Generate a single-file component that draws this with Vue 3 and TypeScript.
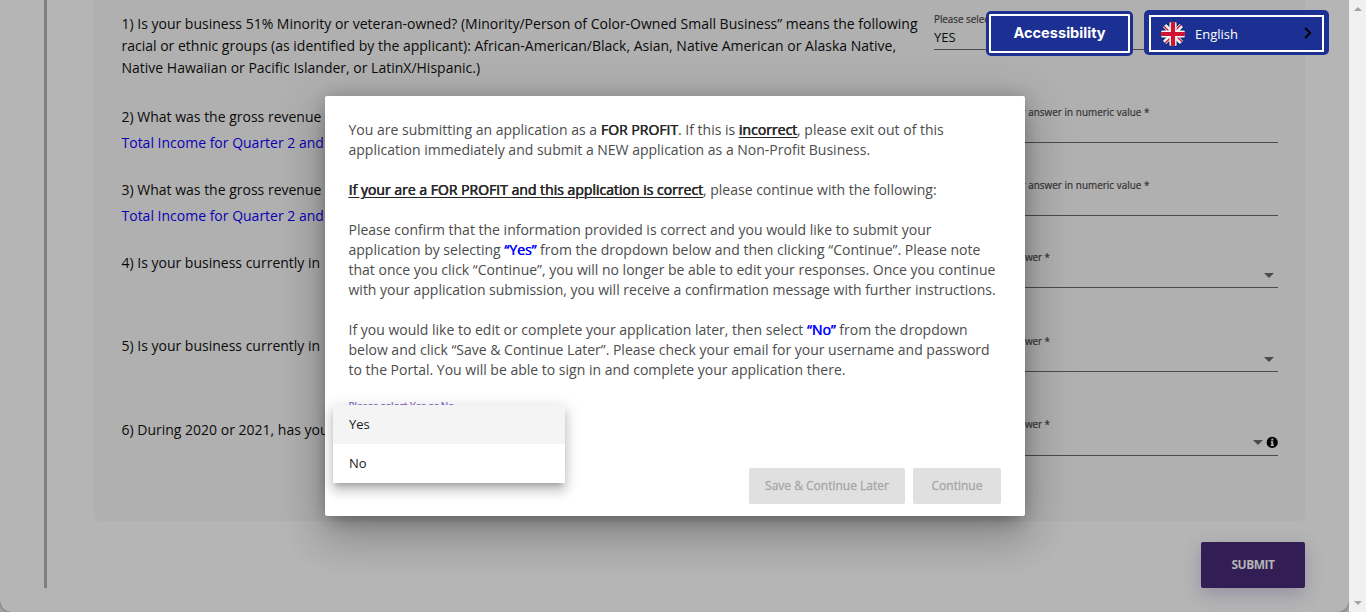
<script setup lang="ts">
interface Question {
  id: number
  lines: string[]
  note?: string
  label: string
  value?: string
  select?: boolean
  info?: boolean
}

const questions: Question[] = [
  {
    id: 1,
    lines: [
      '1) Is your business 51% Minority or veteran-owned? (Minority/Person of Color-Owned Small Business” means the following',
      'racial or ethnic groups (as identified by the applicant): African-American/Black, Asian, Native American or Alaska Native,',
      'Native Hawaiian or Pacific Islander, or LatinX/Hispanic.)',
    ],
    label: 'Please select an answer *',
    value: 'YES',
  },
  {
    id: 2,
    lines: ['2) What was the gross revenue'],
    note: 'Total Income for Quarter 2 and',
    label: 'Please provide your answer in numeric value *',
  },
  {
    id: 3,
    lines: ['3) What was the gross revenue'],
    note: 'Total Income for Quarter 2 and',
    label: 'Please provide your answer in numeric value *',
  },
  { id: 4, lines: ['4) Is your business currently in'], label: 'Please select an answer *', select: true },
  { id: 5, lines: ['5) Is your business currently in'], label: 'Please select an answer *', select: true },
  { id: 6, lines: ['6) During 2020 or 2021, has your'], label: 'Please select an answer *', select: true, info: true },
]

const options: string[] = ['Yes', 'No']
</script>

<template>
  <div class="screen">
    <main class="page">
      <div class="rule"></div>
      <div class="content">
        <section class="panel">
          <div v-for="q in questions" :key="q.id" class="row" :class="'row-' + q.id">
            <div class="question">
              <div v-for="line in q.lines" :key="line">{{ line }}</div>
              <div v-if="q.note" class="note">{{ q.note }}</div>
            </div>
            <div class="field">
              <span class="label" :class="{ numeric: q.note }">{{ q.label }}</span>
              <span class="value">{{ q.value }}</span>
              <span v-if="q.select" class="tools">
                <i class="caret"></i>
                <svg v-if="q.info" class="info" viewBox="0 0 12 12">
                  <circle cx="6.2" cy="6.4" r="5.6" fill="#000" />
                  <path d="M4.7 5.2h2.6v3.6H8v1.2H4.5V8.8h.8V6.4h-.6zM5.3 2.5h2v1.9h-2z" fill="#b0b0b0" />
                </svg>
              </span>
            </div>
          </div>
        </section>
        <button class="submit">SUBMIT</button>
      </div>
    </main>
    <aside class="scrollbar"><i class="up"></i><i class="down"></i></aside>

    <section class="dialog">
      <p>You are submitting an application as a <b>FOR PROFIT</b>. If this is <b class="u">incorrect</b>, please exit out of this<br />application immediately and submit a NEW application as a Non-Profit Business.</p>
      <p><b class="u">If your are a FOR PROFIT and this application is correct</b>, please continue with the following:</p>
      <p>Please confirm that the information provided is correct and you would like to submit your<br />application by selecting <b class="blue">“Yes”</b> from the dropdown below and then clicking “Continue”. Please note<br />that once you click “Continue”, you will no longer be able to edit your responses. Once you continue<br />with your application submission, you will receive a confirmation message with further instructions.</p>
      <p>If you would like to edit or complete your application later, then select <b class="blue">“No”</b> from the dropdown<br />below and click “Save &amp; Continue Later”. Please check your email for your username and password<br />to the Portal. You will be able to sign in and complete your application there.</p>
      <span class="dialog-label">Please select Yes or No</span>
      <div class="actions">
        <button class="save">Save &amp; Continue Later</button>
        <button class="continue">Continue</button>
      </div>
      <ul class="menu">
        <li v-for="(option, i) in options" :key="option" :class="{ active: i === 0 }">{{ option }}</li>
      </ul>
    </section>

    <div class="floating">
      <button class="access"><span>Accessibility</span></button>
      <div class="language">
        <div class="language-inner">
          <svg class="flag" viewBox="0 0 24 24">
            <defs><clipPath id="disc"><circle cx="12" cy="12" r="12" /></clipPath></defs>
            <g clip-path="url(#disc)">
              <path fill="#062b70" d="M0 0h24v24H0z" />
              <path d="M1 1l22 22M23 1L1 23" stroke="#f3f3f6" stroke-width="4.6" />
              <path d="M1.5 2.8L9 10.3M21.2 1.5L14 8.7M22.5 21.2L15 13.7M2.8 22.5L10 15.3" stroke="#d01330" stroke-width="1.3" />
              <path d="M12 0v24M0 12h24" stroke="#f5f5f8" stroke-width="7.2" />
              <path d="M12 0v24M0 12h24" stroke="#d01330" stroke-width="4.2" />
            </g>
          </svg>
          <span>English</span>
          <svg class="chevron" viewBox="0 0 8 12"><path d="M1.2 1l5 5-5 5" fill="none" stroke="#000" stroke-width="1.9" /></svg>
        </div>
      </div>
    </div>
  </div>
</template>

<style>
body {
  margin: 0;
  overflow: hidden;
}
</style>

<style scoped>
.screen {
  position: relative;
  display: flex;
  width: 1366px;
  height: 612px;
  overflow: hidden;
  background: #a4a4a4;
  font-family: 'Open Sans', 'Noto Sans', sans-serif;
  font-size: 14px;
  color: #0b0b0b;
}
button {
  padding: 0;
  border: 0;
  font-family: inherit;
}
.page {
  display: flex;
  width: 1349px;
  height: 612px;
  box-sizing: border-box;
  background: #b5b5b5;
  border-radius: 0 0 12px 12px;
  box-shadow: 0 0 3px #555;
}
.rule {
  width: 3px;
  height: 588px;
  margin-left: 44px;
  background: #7d7d83;
}
.content {
  display: flex;
  flex-direction: column;
  align-items: flex-end;
  width: 1211px;
  margin-left: 47px;
}
.panel {
  width: 1211px;
  height: 521px;
  box-sizing: border-box;
  padding: 13px 27px 0 27.5px;
  background: #b0b0b0;
  border-radius: 0 0 5px 5px;
}
.row {
  display: flex;
  justify-content: space-between;
  height: 73px;
  line-height: 22px;
  white-space: nowrap;
}
.row-1 { height: 93px; }
.row-4 { height: 83px; }
.row-5 { height: 84px; }
.row-4 .field,
.row-6 .field { margin-top: -1px; }
.row-6 .field { height: 38px; }
.note {
  margin-top: 4px;
  color: #0b00b4;
}
.field {
  display: flex;
  flex-direction: column;
  width: 344px;
  height: 37px;
  box-sizing: border-box;
  border-bottom: 1px solid #4b4b4b;
}
.label {
  height: 12px;
  font-size: 9.9px;
  line-height: 12px;
  letter-spacing: -0.04px;
  color: #333;
  -webkit-text-stroke: 0.2px #333;
}
.numeric { letter-spacing: 0.04px; }
.value {
  height: 24px;
  font-size: 13px;
  line-height: 25px;
}
.tools {
  display: flex;
  align-items: center;
  justify-content: flex-end;
  gap: 3px;
  height: 12px;
  margin-top: -18px;
  padding-right: 4px;
}
.row-6 .tools { padding-right: 0; }
.caret {
  border: 5px solid transparent;
  border-top-color: #4b4b4b;
  border-bottom: 0;
}
.info {
  width: 12px;
  height: 12px;
}
.submit {
  width: 104px;
  height: 46px;
  margin-top: 21px;
  padding-bottom: 1px;
  border-radius: 2px;
  background: #321e55;
  color: #b5b5b5;
  font-size: 12px;
  font-weight: 700;
  letter-spacing: -0.5px;
  box-shadow: 0 6px 18px rgba(70, 45, 120, 0.28);
}
.scrollbar {
  display: flex;
  flex-direction: column;
  justify-content: space-between;
  align-items: center;
  width: 17px;
  height: 612px;
  box-sizing: border-box;
  padding: 7px 0;
  background: #f0f0f0;
  position: relative;
}
.scrollbar i { border: 4px solid transparent; }
.up {
  border-top: 0 !important;
  border-bottom-color: #a3a3a3 !important;
}
.down {
  border-bottom: 0 !important;
  border-top-color: #a3a3a3 !important;
}
.dialog {
  position: absolute;
  left: 325px;
  top: 96px;
  width: 700px;
  height: 420px;
  box-sizing: border-box;
  padding: 24px 24px 0 23.5px;
  border-radius: 2px;
  background: #fff;
  color: #4c4c4c;
  line-height: 20px;
  white-space: nowrap;
  box-shadow: 0 11px 15px -7px rgba(0, 0, 0, 0.2), 0 24px 38px 3px rgba(0, 0, 0, 0.14), 0 9px 46px 8px rgba(0, 0, 0, 0.12), 0 0 16px rgba(0, 0, 0, 0.16);
}
.dialog p { margin: 0 0 20px; }
.dialog b {
  font-weight: 400;
  color: #262626;
  text-shadow: 0.4px 0 0 currentColor;
  -webkit-text-stroke: 0.15px currentColor;
}
.dialog .u {
  text-decoration: underline;
  text-underline-offset: 2px;
}
.dialog .blue { color: #00f; }
.dialog-label {
  display: block;
  height: 12px;
  font-size: 9.9px;
  line-height: 12px;
  color: #8461c4;
  -webkit-text-stroke: 0.2px #8461c4;
}
.actions {
  display: flex;
  justify-content: flex-end;
  gap: 8px;
  margin-top: 56px;
}
.actions button {
  height: 36px;
  padding-bottom: 1px;
  border-radius: 2px;
  background: #e0e0e0;
  color: #a6a6a6;
  font-size: 12px;
  -webkit-text-stroke: 0.3px #a6a6a6;
}
.save { width: 156px; }
.continue { width: 88px; }
.menu {
  position: absolute;
  left: 8px;
  top: 309px;
  width: 232px;
  margin: 0;
  padding: 0;
  list-style: none;
  background: #fff;
  color: #202020;
  font-size: 13px;
  box-shadow: 0 5px 5px -3px rgba(0, 0, 0, 0.2), 0 8px 10px 1px rgba(0, 0, 0, 0.14), 0 3px 14px 2px rgba(0, 0, 0, 0.12);
}
.menu li {
  height: 39px;
  padding-left: 16px;
  line-height: 39px;
}
.menu .active { background: #f4f4f4; }
.floating {
  position: absolute;
  left: 986px;
  top: 10px;
  display: flex;
  align-items: flex-start;
  gap: 11px;
}
.access {
  width: 147px;
  height: 45px;
  margin-top: 1px;
  padding: 3px;
  border-radius: 5px;
  background: #1c3093;
}
.access span {
  display: block;
  height: 39px;
  box-sizing: border-box;
  border: 2px solid #fff;
  border-radius: 1px;
  color: #fff;
  font: 700 14.6px/35px Inter, sans-serif;
}
.language {
  width: 185px;
  height: 45px;
  box-sizing: border-box;
  padding: 5px 5px 3px;
  border-radius: 5px;
  background: #1c3093;
}
.language-inner {
  display: flex;
  align-items: center;
  height: 37px;
  box-sizing: border-box;
  padding: 1px 10px 0;
  border: 2px solid #fff;
  color: #fff;
  font-size: 13px;
}
.flag {
  width: 24px;
  height: 24px;
  margin-right: 10px;
}
.chevron {
  width: 8px;
  height: 12px;
  margin: -3px 0 0 auto;
}
</style>
